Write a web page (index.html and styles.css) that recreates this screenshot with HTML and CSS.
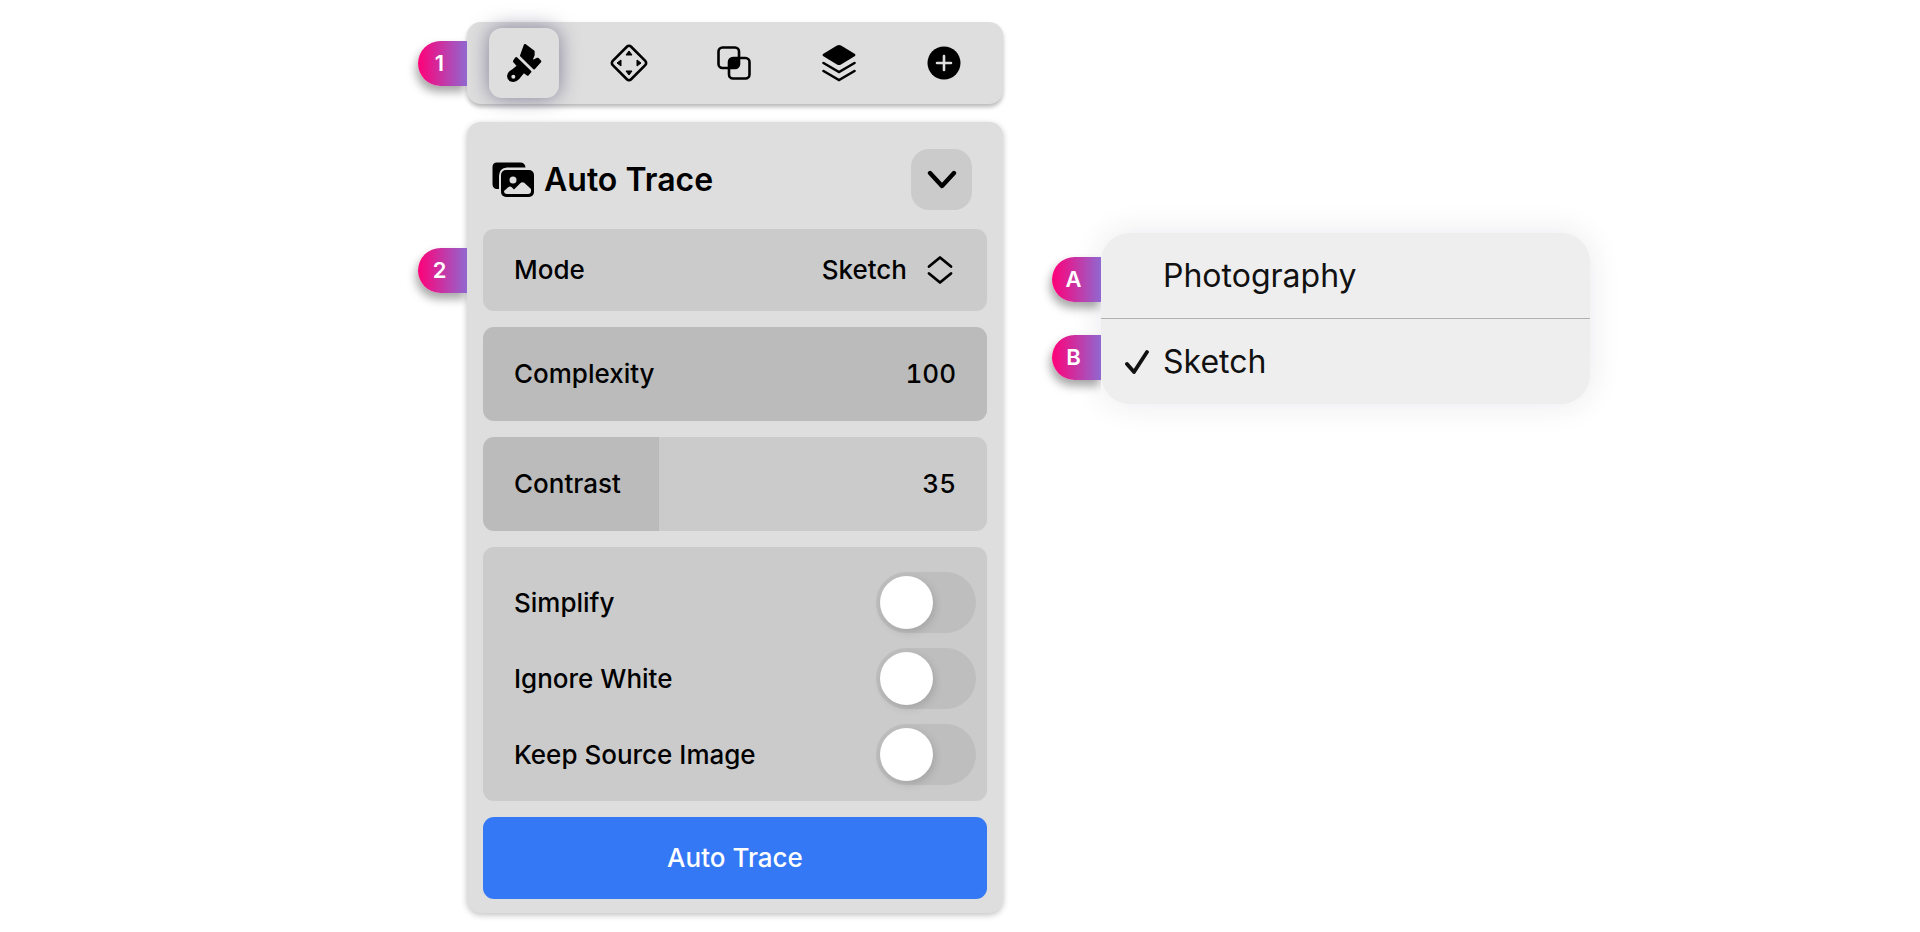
FILE: index.html
```html
<!DOCTYPE html>
<html lang="en">
<head>
  <meta charset="UTF-8">
  <meta name="viewport" content="width=device-width, initial-scale=1.0">
  <title>Auto Trace</title>
  <link rel="stylesheet" href="styles.css">
</head>
<body>
  <main class="page">
    <div class="inspector">
      <!-- tabs -->
      <nav class="toolbar" aria-label="Inspector tabs">
        <span class="badge">1</span>
        <button class="tool active" type="button" aria-label="Style">
          <svg width="36" height="40" viewBox="0 0 108 120">
            <g stroke="#000" stroke-width="8" stroke-linejoin="round">
              <path d="M57 7L82 26L82 36L76 50Q78 55 84 53L95 48L102 55L84 75L46 38Z"/>
              <path d="M31 46L72 86L65 94L53 85L36 106Q26 116 14 111Q4 105 9 93Q12 87 20 83L37 69L25 55Z"/>
            </g>
            <path d="M34 39L81 83" stroke="#dedede" stroke-width="4"/>
            <circle cx="22" cy="101" r="6" fill="#dedede"/>
          </svg>
        </button>
        <button class="tool" type="button" aria-label="Arrange">
          <svg width="40" height="40" viewBox="0 0 40 40">
            <rect x="7" y="7" width="26" height="26" rx="3" fill="none" stroke="#000" stroke-width="2.6" transform="rotate(45 20 20)"/>
            <path d="M20 8L23 12H17ZM20 32L23 28H17ZM8 20L12 17V23ZM32 20L28 17V23Z" stroke="#000" stroke-linejoin="round"/>
          </svg>
        </button>
        <button class="tool" type="button" aria-label="Combine">
          <svg width="34" height="34" viewBox="0 0 34 34">
            <g fill="none" stroke="#000" stroke-width="2.6">
              <rect x="1.5" y="1.5" width="20.5" height="20.5" rx="4"/>
              <rect x="12" y="12" width="20.5" height="20.5" rx="4"/>
            </g>
            <path d="M16 12H22V18Q22 22 18 22H12V16Q12 12 16 12Z"/>
          </svg>
        </button>
        <button class="tool" type="button" aria-label="Layers">
          <svg width="34" height="38" viewBox="0 0 34 38">
            <path d="M15 1.5Q17 0.5 19 1.5L33 10Q34 11 33 12L19 20.5Q17 21.5 15 20.5L1 12Q0 11 1 10Z"/>
            <path d="M1.500 19L17 28L32.500 19M1.500 27L17 36L32.500 27" fill="none" stroke="#000" stroke-width="2.6" stroke-linecap="round"/>
          </svg>
        </button>
        <button class="tool" type="button" aria-label="Add">
          <svg width="34" height="34" viewBox="0 0 34 34">
            <circle cx="17" cy="17" r="16.5"/>
            <path d="M17 10V24M10 17H24" stroke="#dedede" stroke-width="2.6" stroke-linecap="round"/>
          </svg>
        </button>
      </nav>

      <!-- auto trace panel -->
      <section class="panel">
        <header class="panel-head">
          <svg width="42" height="36" viewBox="0 0 42 36">
            <path d="M5 0.5H28Q33 0.5 33.5 5.5H15Q7 6 7 14V27H4Q0.5 26 0.5 22V5Q0.5 0.5 5 0.5Z"/>
            <rect x="9" y="8" width="33" height="27" rx="5"/>
            <circle cx="21" cy="18" r="3.5" fill="#dedede"/>
            <path d="M12 29L16.5 25Q18 24 19.5 25L22 27.5L28.5 21Q30.5 19.5 32.5 21L39 27V29Q39 32 36 32H15Q12 32 12 29Z" fill="#dedede"/>
          </svg>
          <h1>Auto Trace</h1>
          <button class="collapse" type="button" aria-label="Collapse">
            <svg width="30" height="20" viewBox="0 0 30 20">
              <path d="M3 3L15 16L27 3" fill="none" stroke="#000" stroke-width="4.4" stroke-linecap="round" stroke-linejoin="round"/>
            </svg>
          </button>
        </header>

        <div class="row mode">
          <span class="badge">2</span>
          <label for="mode">Mode</label>
          <select id="mode">
            <option>Photography</option>
            <option selected>Sketch</option>
          </select>
          <svg width="26" height="30" viewBox="0 0 26 30">
            <path d="M2 11.5L13 2.5L24 11.5M2 18.5L13 27.5L24 18.5" fill="none" stroke="#000" stroke-width="2.8" stroke-linecap="round" stroke-linejoin="round"/>
          </svg>
        </div>

        <div class="slider">
          <input type="range" id="complexity" min="0" max="100" value="100" style="--fill: 100%">
          <label for="complexity">Complexity</label>
          <output for="complexity">100</output>
        </div>
        <div class="slider">
          <input type="range" id="contrast" min="0" max="100" value="35" style="--fill: 35%">
          <label for="contrast">Contrast</label>
          <output for="contrast">35</output>
        </div>

        <div class="switches">
          <div class="switch-row">
            <label for="simplify">Simplify</label>
            <input class="switch" type="checkbox" id="simplify">
          </div>
          <div class="switch-row">
            <label for="ignore-white">Ignore White</label>
            <input class="switch" type="checkbox" id="ignore-white">
          </div>
          <div class="switch-row">
            <label for="keep-source">Keep Source Image</label>
            <input class="switch" type="checkbox" id="keep-source">
          </div>
        </div>

        <button class="submit" type="button">Auto Trace</button>
      </section>
    </div>

    <!-- mode options -->
    <ul class="menu">
      <li>
        <span class="badge">A</span>
        <button type="button">Photography</button>
      </li>
      <li>
        <span class="badge">B</span>
        <button type="button">
          <svg width="24" height="26" viewBox="0 0 24 26">
            <path d="M2 15L9 23L22 3" fill="none" stroke="#111" stroke-width="3.8" stroke-linecap="round" stroke-linejoin="round"/>
          </svg>
          Sketch
        </button>
      </li>
    </ul>
  </main>

  <script>
    let sliders = document.querySelectorAll('.slider');

    sliders.forEach(function(slider){
      let input = slider.querySelector('input');
      let output = slider.querySelector('output');
      input.addEventListener('input', function(){
        input.style.setProperty('--fill', input.value + '%');
        output.value = input.value;
      }, false);
    });
  </script>
</body>
</html>
```
FILE: styles.css
```css
*{
  box-sizing: border-box;
}
body{
  margin: 0;
  background: #fff;
  color: #000;
  font: 500 26px/32px Inter, "Liberation Sans", sans-serif;
}
button, select{
  border: none;
  padding: 0;
  background: none;
  color: inherit;
  font: inherit;
  cursor: pointer;
}
svg{
  display: block;
  flex: none;
}
.page{
  display: grid;
  grid-template-columns: minmax(0, 536px) minmax(0, 489px);
  column-gap: 98px;
  justify-content: center;
  align-items: start;
  padding: 22px 0 20px 137px;
}

/* numbered callouts */
.badge{
  position: absolute;
  right: 100%;
  width: 49px;
  height: 45px;
  padding-right: 6px;
  border-radius: 23px 0 0 23px;
  background: linear-gradient(to right, #ff0078, #9068d0);
  box-shadow: -2px 6px 10px rgba(0, 0, 0, 0.35);
  clip-path: inset(-20px 0 -20px -20px);
  color: #fff;
  font-size: 22px;
  font-weight: 600;
  line-height: 45px;
  text-align: center;
}

/* toolbar */
.toolbar{
  position: relative;
  display: flex;
  align-items: center;
  gap: 35px;
  height: 82px;
  padding: 0 22px;
  border-radius: 14px;
  background: #dedede;
  box-shadow: 0 3px 4px rgba(0, 0, 0, 0.28);
}
.tool{
  display: flex;
  align-items: center;
  justify-content: center;
  width: 70px;
  height: 70px;
  border-radius: 13px;
}
.tool.active{
  background: #dedede;
  box-shadow: 0 0 20px rgba(70, 65, 105, 0.6);
}

/* panel */
.panel{
  display: flex;
  flex-direction: column;
  gap: 16px;
  margin-top: 18px;
  padding: 27px 16px 14px;
  border-radius: 14px;
  background: #dedede;
  box-shadow: 0 2px 6px rgba(0, 0, 0, 0.25);
}
.panel-head{
  display: flex;
  align-items: center;
  gap: 10px;
  margin-bottom: 3px;
  padding: 0 15px 0 9px;
}
h1{
  flex: 1;
  margin: 0;
  font-size: 32px;
  font-weight: 600;
  line-height: 40px;
}
.collapse{
  display: flex;
  align-items: center;
  justify-content: center;
  width: 61px;
  height: 61px;
  border-radius: 18px;
  background: #cbcbcb;
}
.row{
  position: relative;
  display: flex;
  align-items: center;
  height: 82px;
  padding: 0 34px 0 31px;
  border-radius: 11px;
  background: #cbcbcb;
}
.row label{
  flex: 1;
}
.row select{
  appearance: none;
  margin-right: 20px;
  text-align: right;
  text-align-last: right;
}
.mode .badge{
  margin-right: 16px;
}

/* slider: the whole bar is the track */
.slider{
  display: grid;
  grid-template-columns: 1fr auto;
  align-items: center;
  height: 94px;
}
.slider input{
  grid-area: 1 / 1 / 2 / 3;
  appearance: none;
  width: 100%;
  height: 100%;
  margin: 0;
  border-radius: 11px;
  background: linear-gradient(to right, #bbb var(--fill), #cbcbcb var(--fill));
  cursor: pointer;
}
.slider input::-webkit-slider-thumb{
  appearance: none;
  width: 1px;
  height: 94px;
}
.slider label, .slider output{
  grid-row: 1;
  z-index: 1;
  pointer-events: none;
}
.slider label{
  grid-column: 1;
  padding-left: 31px;
}
.slider output{
  grid-column: 2;
  padding-right: 31px;
  font-variant-numeric: tabular-nums;
}

/* switches */
.switches{
  display: grid;
  gap: 15px;
  padding: 25px 11px 16px 31px;
  border-radius: 11px;
  background: #cbcbcb;
}
.switch-row{
  display: flex;
  align-items: center;
  justify-content: space-between;
}
.switch{
  appearance: none;
  width: 100px;
  height: 61px;
  margin: 0;
  padding: 4px;
  border-radius: 31px;
  background: #bebebf;
  cursor: pointer;
}
.switch::before{
  content: "";
  display: block;
  width: 53px;
  height: 53px;
  border-radius: 50%;
  background: #fff;
  box-shadow: 2px 3px 8px rgba(0, 0, 0, 0.14);
}
.switch:checked{
  background: #3478f6;
}
.switch:checked::before{
  margin-left: auto;
}
.submit{
  height: 82px;
  border-radius: 11px;
  background: #3478f6;
  color: #fff;
}

/* menu */
.menu{
  margin: 211px 0 0;
  padding: 0;
  border-radius: 29px;
  background: #eee;
  box-shadow: 0 0 32px rgba(40, 40, 80, 0.1);
  list-style: none;
}
.menu li{
  position: relative;
}
.menu li + li{
  border-top: 1px solid #b0b0b0;
}
.menu .badge{
  top: 24px;
}
.menu li + li .badge{
  top: 16px;
}
.menu button{
  display: flex;
  align-items: center;
  gap: 14px;
  width: 100%;
  height: 85px;
  padding-left: 24px;
  color: #111;
  font-size: 32px;
  font-weight: 400;
  line-height: 40px;
}
.menu button:not(:has(svg)){
  padding-left: 62px;
}

@media (max-width: 1300px){
  .page{
    grid-template-columns: minmax(0, 536px);
    padding-left: 70px;
    padding-right: 20px;
  }
  .menu{
    margin-top: 40px;
  }
}
```
